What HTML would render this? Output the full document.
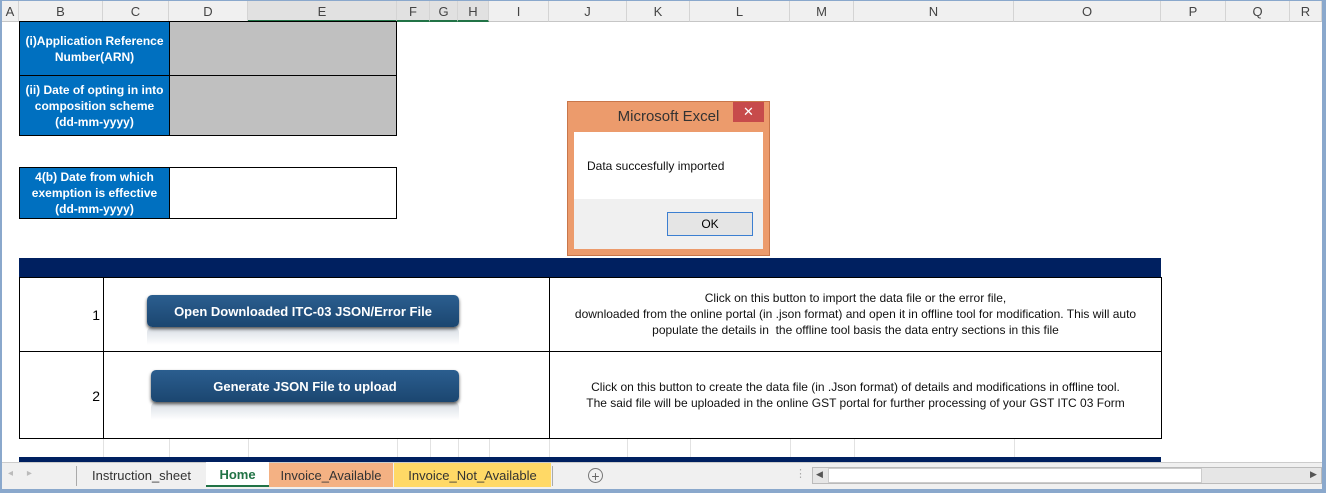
<!DOCTYPE html>
<html><head><style>
body{margin:0;width:1326px;height:493px;overflow:hidden;background:#fff;font-family:"Liberation Sans",sans-serif;position:relative}
.a{position:absolute;box-sizing:border-box}
.hd{top:1px;height:21px;background:#f0f0f0;border-right:1px solid #d4d4d4;border-bottom:1px solid #c6c6c6;font-size:13px;color:#444;text-align:center;line-height:21px}
.blue{background:#0070c0;color:#fff;font-weight:bold;font-size:12px;text-align:center;display:flex;align-items:center;justify-content:center;border:1px solid #000;line-height:16px}
.btn{background:linear-gradient(#2b5e8f,#1b4670);color:#fff;font-weight:bold;font-size:13px;text-align:center;border-radius:5px;line-height:33px;box-shadow:0 2px 3px #555}
.refl{background:linear-gradient(#d7dde4,#fff);border-radius:5px 5px 0 0}
.txt{font-size:12px;color:#111;text-align:center;line-height:16px}
.gl{background:#e2e2e2;width:1px}
</style></head><body>
<div class="a" style="left:0;top:0;width:2px;height:493px;background:#8aa8cc"></div>
<div class="a" style="left:1322px;top:0;width:4px;height:493px;background:#8aa8cc"></div>
<div class="a" style="left:0;top:0;width:1326px;height:1px;background:#8aa8cc"></div>
<div class="a hd" style="left:2px;width:17px">A</div>
<div class="a hd" style="left:19px;width:84px">B</div>
<div class="a hd" style="left:103px;width:66px">C</div>
<div class="a hd" style="left:169px;width:79px">D</div>
<div class="a hd" style="left:248px;width:149px;background:#e1e1e1;border-bottom:2px solid #217346">E</div>
<div class="a hd" style="left:397px;width:33px;background:#e1e1e1;border-bottom:2px solid #217346">F</div>
<div class="a hd" style="left:430px;width:28px;background:#e1e1e1;border-bottom:2px solid #217346">G</div>
<div class="a hd" style="left:458px;width:31px;background:#e1e1e1;border-bottom:2px solid #217346">H</div>
<div class="a hd" style="left:489px;width:60px">I</div>
<div class="a hd" style="left:549px;width:78px">J</div>
<div class="a hd" style="left:627px;width:63px">K</div>
<div class="a hd" style="left:690px;width:100px">L</div>
<div class="a hd" style="left:790px;width:64px">M</div>
<div class="a hd" style="left:854px;width:160px">N</div>
<div class="a hd" style="left:1014px;width:147px">O</div>
<div class="a hd" style="left:1161px;width:65px">P</div>
<div class="a hd" style="left:1226px;width:64px">Q</div>
<div class="a hd" style="left:1290px;width:32px">R</div>

<div class="a blue" style="left:19px;top:21px;width:151px;height:55px">(i)Application Reference<br>Number(ARN)</div>
<div class="a blue" style="left:19px;top:75px;width:151px;height:61px">(ii) Date of opting in into<br>composition scheme<br>(dd-mm-yyyy)</div>
<div class="a" style="left:169px;top:21px;width:228px;height:55px;background:#c0c0c0;border:1px solid #000"></div>
<div class="a" style="left:169px;top:75px;width:228px;height:61px;background:#c0c0c0;border:1px solid #000"></div>
<div class="a blue" style="left:19px;top:167px;width:151px;height:52px">4(b) Date from which<br>exemption is effective<br>(dd-mm-yyyy)</div>
<div class="a" style="left:169px;top:167px;width:228px;height:52px;border:1px solid #000"></div>

<div class="a" style="left:19px;top:258px;width:1142px;height:20px;background:#002060"></div>
<div class="a" style="left:19px;top:277px;width:1143px;height:162px;border:1px solid #000"></div>
<div class="a" style="left:19px;top:351px;width:1143px;height:1px;background:#000"></div>
<div class="a" style="left:103px;top:277px;width:1px;height:162px;background:#000"></div>
<div class="a" style="left:549px;top:277px;width:1px;height:162px;background:#000"></div>
<div class="a" style="left:60px;top:307px;width:40px;font-size:14px;text-align:right">1</div>
<div class="a" style="left:60px;top:388px;width:40px;font-size:14px;text-align:right">2</div>
<div class="a refl" style="left:147px;top:327px;width:312px;height:18px"></div>
<div class="a btn" style="left:147px;top:295px;width:312px;height:32px">Open Downloaded ITC-03 JSON/Error File</div>
<div class="a refl" style="left:151px;top:402px;width:308px;height:18px"></div>
<div class="a btn" style="left:151px;top:370px;width:308px;height:32px">Generate JSON File to upload</div>
<div class="a txt" style="left:550px;top:290px;width:611px">Click on this button to import the data file or the error file,<br>downloaded from the online portal (in .json format) and open it in offline tool for modification. This will auto<br>populate the details in &nbsp;the offline tool basis the data entry sections in this file</div>
<div class="a txt" style="left:550px;top:379px;width:611px">Click on this button to create the data file (in .Json format) of details and modifications in offline tool.<br>The said file will be uploaded in the online GST portal for further processing of your GST ITC 03 Form</div>

<div class="a gl" style="left:103px;top:439px;height:18px"></div>
<div class="a gl" style="left:169px;top:439px;height:18px"></div>
<div class="a gl" style="left:248px;top:439px;height:18px"></div>
<div class="a gl" style="left:397px;top:439px;height:18px"></div>
<div class="a gl" style="left:430px;top:439px;height:18px"></div>
<div class="a gl" style="left:458px;top:439px;height:18px"></div>
<div class="a gl" style="left:489px;top:439px;height:18px"></div>
<div class="a gl" style="left:549px;top:439px;height:18px"></div>
<div class="a gl" style="left:627px;top:439px;height:18px"></div>
<div class="a gl" style="left:690px;top:439px;height:18px"></div>
<div class="a gl" style="left:790px;top:439px;height:18px"></div>
<div class="a gl" style="left:854px;top:439px;height:18px"></div>
<div class="a gl" style="left:1014px;top:439px;height:18px"></div>
<div class="a" style="left:19px;top:457px;width:1142px;height:6px;background:#002060"></div>

<div class="a" style="left:2px;top:462px;width:1320px;height:27px;background:#f0f0f0;border-top:1px solid #ccc"></div>
<div class="a" style="left:0;top:489px;width:1326px;height:4px;background:#8aa8cc"></div>
<div class="a" style="left:8px;top:468px;font-size:10px;color:#bbb">◂ &nbsp;&nbsp;&nbsp;&nbsp;▸</div>
<div class="a" style="left:76px;top:466px;width:1px;height:20px;background:#aaa"></div>
<div class="a" style="left:77px;top:463px;width:129px;height:24px;font-size:13px;color:#333;text-align:center;line-height:25px">Instruction_sheet</div>
<div class="a" style="left:206px;top:462px;width:63px;height:25px;background:#fff;border-bottom:2px solid #217346;font-size:13px;font-weight:bold;color:#217346;text-align:center;line-height:26px">Home</div>
<div class="a" style="left:269px;top:463px;width:124px;height:24px;background:#f4b183;font-size:13px;color:#333;text-align:center;line-height:25px">Invoice_Available</div>
<div class="a" style="left:394px;top:463px;width:157px;height:24px;background:#ffd966;font-size:13px;color:#333;text-align:center;line-height:25px">Invoice_Not_Available</div>
<div class="a" style="left:552px;top:466px;width:1px;height:20px;background:#aaa"></div>
<div class="a" style="left:588px;top:468px;width:15px;height:15px;border:1px solid #777;border-radius:50%;font-size:14px;color:#666;text-align:center;line-height:14px">+</div>
<div class="a" style="left:795px;top:467px;font-size:11px;color:#aaa">⋮</div>
<div class="a" style="left:812px;top:467px;width:510px;height:17px;background:#e6e6e6;border:1px solid #bbb"></div>
<div class="a" style="left:828px;top:468px;width:374px;height:15px;background:#fff;border:1px solid #ccc"></div>
<div class="a" style="left:816px;top:469px;font-size:9px;color:#555">◀</div>
<div class="a" style="left:1310px;top:469px;font-size:9px;color:#555">▶</div>

<div class="a" style="left:567px;top:101px;width:203px;height:155px;background:#ec9b6c;border:1px solid #c8764a"></div>
<div class="a" style="left:567px;top:108px;width:203px;font-size:15px;color:#333;text-align:center">Microsoft Excel</div>
<div class="a" style="left:733px;top:102px;width:31px;height:20px;background:#c74b4b;color:#fff;text-align:center;font-size:13px;line-height:20px">✕</div>
<div class="a" style="left:574px;top:132px;width:189px;height:117px;background:#f0f0f0"></div>
<div class="a" style="left:574px;top:132px;width:189px;height:67px;background:#fff"></div>
<div class="a" style="left:587px;top:159px;font-size:12px;color:#111">Data succesfully imported</div>
<div class="a" style="left:667px;top:212px;width:86px;height:24px;background:#e5e5e5;border:1px solid #3c7fd1;font-size:12px;text-align:center;line-height:22px">OK</div>
</body></html>
